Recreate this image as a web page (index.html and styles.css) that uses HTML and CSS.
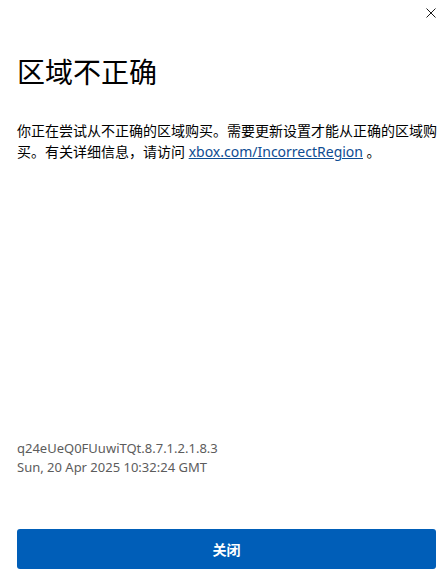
FILE: index.html
```html
<!DOCTYPE html>
<html lang="zh-CN">
<head>
    <meta charset="UTF-8">
    <meta name="viewport" content="width=device-width, initial-scale=1.0">
    <title>区域不正确</title>
    <link rel="stylesheet" href="styles.css">
</head>
<body>
    <div class="dialog">
        <div class="top-bar">
            <button type="button" class="close-x" aria-label="关闭">
                <svg width="10" height="10" viewBox="0 0 10 10">
                    <path d="M0.5 0.5 L9.5 9.5 M9.5 0.5 L0.5 9.5" stroke="#1a1a1a" stroke-width="1" fill="none"/>
                </svg>
            </button>
        </div>
        <h1>区域不正确</h1>
        <p class="message">你正在尝试从不正确的区域购买。需要更新设置才能从正确的区域购买。有关详细信息，请访问 <a href="#">xbox.com/IncorrectRegion</a> 。</p>

        <div class="meta">
            <div>q24eUeQ0FUuwiTQt.8.7.1.2.1.8.3</div>
            <div>Sun, 20 Apr 2025 10:32:24 GMT</div>
        </div>
        <button type="button" class="primary">关闭</button>
    </div>
</body>
</html>
```

FILE: styles.css
```css
body {
    margin: 0;
    font-family: "Noto Sans", "Noto Sans CJK SC", sans-serif;
    background: #fff;
    color: #000;
}

.dialog {
    height: 100vh;
    box-sizing: border-box;
    display: flex;
    flex-direction: column;
    padding: 0 12px 13px 17px;
}

.top-bar {
    display: flex;
    justify-content: flex-end;
    height: 26px;
}

.close-x {
    background: none;
    border: none;
    padding: 0;
    margin: 8px 0 0 0;
    width: 10px;
    height: 10px;
    cursor: pointer;
    display: flex;
}

h1 {
    margin: 26px 0 0 0;
    font-size: 28px;
    font-weight: 400;
    line-height: 40px;
}

.message {
    margin: 28px -2px 0 0;
    font-size: 14px;
    line-height: 21px;
}

.message a {
    color: #0e4c92;
    text-decoration: underline;
}

.meta {
    margin-top: auto;
    font-size: 13px;
    line-height: 19px;
    color: #5c5c5c;
}

.primary {
    margin-top: 52px;
    height: 40px;
    border: none;
    border-radius: 3px;
    background-color: #005eb8;
    color: #fff;
    font-family: "Noto Sans CJK SC", sans-serif;
    font-size: 14px;
    font-weight: 700;
    cursor: pointer;
}
```
